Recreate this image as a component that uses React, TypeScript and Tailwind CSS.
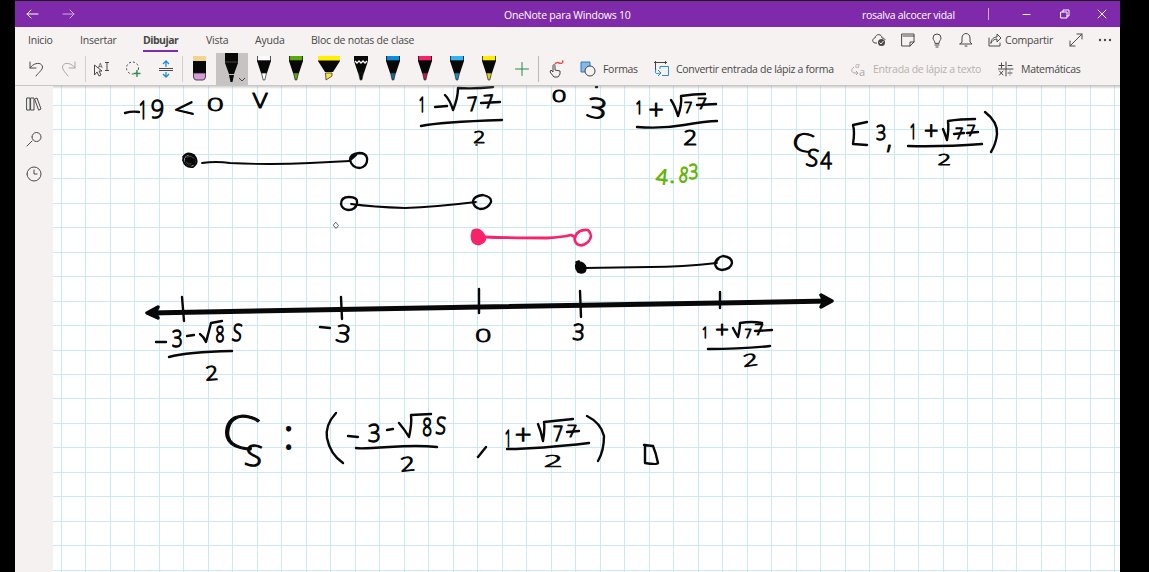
import React from "react";

type G = [string, number, number, number, number, number?, string?];

// [character, centre x, baseline y, cap height, width scale, rotation, fill]
const glyphs: G[] = [
  ["1", 143, 119, 18, 0.6], ["9", 157, 118, 18, 0.95, 2], ["<", 185, 119, 20, 1.3, -6], ["0", 215, 111, 13, 1.65], ["V", 260, 108, 14, 1.3],
  ["1", 422, 112, 14, 0.6], ["7", 473, 111, 14, 0.95, -4], ["7", 489, 108, 13, 1, -4], ["2", 479, 143, 12, 1.25],
  ["0", 559, 102, 11.5, 1.6], ["3", 595, 118, 20, 1.3, 10],
  ["1", 639, 114, 13, 0.7], ["+", 656, 119, 19, 1], ["7", 688, 113, 11, 0.95], ["7", 702, 109, 11, 1.1], ["2", 690, 145, 14, 1.25],
  ["4", 661, 184, 15, 1, 6, "#63b50a"], [".", 672, 183, 17, 1.1, 0, "#63b50a"], ["8", 682.5, 182, 15, 0.75, 8, "#63b50a"], ["3", 693.5, 179, 14, 0.85, 0, "#63b50a"],
  ["C", 801, 151, 18, 1.35, 12], ["S", 811, 166, 17, 0.95, 10], ["4", 826, 169, 17, 0.85],
  ["3", 881, 140, 15, 0.85], [",", 889, 148, 19, 1],
  ["1", 913, 139, 14, 0.6], ["+", 931, 140, 18, 1], ["7", 959, 139, 11, 0.9], ["7", 971, 136, 11, 1], ["2", 944, 165, 10, 1.7],
  ["3", 177, 347, 17, 0.8], ["8", 220, 342, 16, 0.7], ["S", 236, 341, 17, 0.75, 8], ["2", 212, 380, 14, 1.15, -4],
  ["3", 342, 342, 17, 1.1, 8], ["0", 483, 342, 12.5, 1.65], ["3", 578, 340, 16, 0.95, 4],
  ["1", 705, 338, 11, 0.7], ["+", 722, 338, 17, 1], ["7", 748, 338, 9, 0.95], ["7", 759, 335, 10, 1.1], ["2", 751, 366, 12, 1.6, -8],
  ["C", 236, 447, 33, 1.25, 14], ["S", 252, 466, 21, 1.1, 8], [":", 288.5, 449, 29, 1],
  ["3", 374, 442, 18, 0.9], ["8", 427, 436, 18, 0.68], ["S", 440, 434, 17, 0.8, 5], ["2", 408, 471, 14, 1.35, -6],
  ["1", 508, 447, 17, 0.5], ["+", 523, 444, 20, 1.05], ["7", 558, 441, 14, 0.9], ["7", 572, 437, 12, 1.05], ["2", 553, 467, 11.5, 2.1],
];

const strokes: string[] = [
  "M125 113Q132 111 139 112", "M447 106L435 107",
  "M445 95Q450 100 453 110Q458 98 458 88Q475 89 493 87M481 103L500 102M421 126Q440 122 502 120",
  "M596 87h1",
  "M671 100Q675 106 678 116Q682 105 681 96Q694 94 705 94M697 105L716 104M637 127Q661 129 684 125T717 121",
  "M943 129Q945 134 947 140Q949 129 948 121Q960 119 975 119M954 134L964 133M967 133L978 132M908 146Q942 147 982 144",
  "M867 122L853 125Q855 132 853 144L867 145", "M985 112Q998 122 997 134Q996 144 991 152",
  "M156 342L166 342M187 336L194 335M200 334Q204 337 206 342Q209 331 211 323L222 321M169 357Q187 352 232 351",
  "M320 327L330 328",
  "M733 328Q735 332 738 337Q740 328 740 323Q752 321 762 323M755 331L772 330M708 349Q741 349 770 346",
  "M336 413Q325 425 327 438Q330 454 343 463",
  "M348 436L358 437M387 430L393 429M399 423Q405 430 409 437Q412 424 411 415L431 414M356 448Q360 449 389 447T437 447",
  "M486 447L478 457",
  "M538 424Q541 431 543 441Q545 429 544 422L573 419M567 432L579 431M507 449Q538 449 589 443",
  "M587 416Q601 423 604 436Q604 451 598 461",
  "M645 445L645 463Q657 465 658 463Q656 453 653 446L644 445",
];

function Key({ g }: { g: G }) {
  const [c, x, y, h, s, r = 0, f = "#080808"] = g;
  return (
    <text fontSize={h / 0.715} fontWeight={300} textAnchor="middle" fill={f} transform={`translate(${x} ${y}) rotate(${r}) scale(${s} 1)`} stroke={f} strokeWidth={c === ":" ? 2 : 1.2} vectorEffect="non-scaling-stroke">
      {c}
    </text>
  );
}

function Ink() {
  const cols = Array.from({ length: 44 }, (_, i) => Math.round(61 + i * 24.49 - 53));
  const rows = Array.from({ length: 20 }, (_, i) => Math.round(105 + i * 24.45 - 86));
  return (
    <svg className="block h-[486px] w-[1067px]" viewBox="0 0 1067 486">
      <g fill="#cae9f2">
        {cols.map((x) => <rect key={x} x={x} y="0" width="1" height="486" />)}
        {rows.map((y) => <rect key={y} x="0" y={y} width="1067" height="1" />)}
      </g>
      <g transform="translate(-53 -86)" fill="none" stroke="#080808" strokeWidth="2.4" strokeLinecap="round" strokeLinejoin="round" fontFamily="'Open Sans','Noto Sans',sans-serif">
        {strokes.map((d) => <path key={d} d={d} />)}
        {glyphs.map((g, i) => <Key key={i} g={g} />)}
        <g strokeWidth="1.8">
          <path d="M202 163Q216 161 230 163Q270 165 310 163L350 161M351 204Q373 207 405 208Q435 207 476 202M584 268L650 267Q682 267 717 263" />
          <path strokeWidth="2.3" d="M350 160Q350 154 359 153Q366 153 367 158Q368 166 360 168Q352 168 350 160Q352 159 356 155M341 204Q341 197 349 197Q358 197 357 203Q356 210 348 210Q342 209 341 204M473 201Q474 196 483 195Q492 197 491 202Q488 209 480 209Q473 207 473 201M715 263Q716 258 723 256Q732 257 732 263Q731 269 722 270Q715 269 715 263L719 258" />
          <circle cx="190" cy="160.500" r="5.500" fill="#080808" stroke="none" />
          <path d="M183 157Q187 151 194 155Q200 162 193 167Q185 168 183 160Q184 154 190 154Q197 158 194 164" />
          <path d="M187 157Q191 155 194 158M186 162Q188 165 191 164" stroke="#777" strokeWidth=".6" />
          <path d="M576 262Q584 261 586 268Q585 275 578 272Q573 265 579 261Z" fill="#080808" />
        </g>
        <g stroke="#f7236b" strokeWidth="2.800">
          <path d="M484 237Q510 238 547 238Q563 237 571 235L575 237" />
          <path d="M473 231Q479 228 483 234Q488 241 479 244Q472 244 472 236Z" fill="#f7236b" />
          <path d="M575 237Q578 229 588 230Q594 236 588 242Q581 248 576 243Q573 239 577 233" strokeWidth="2.600" />
        </g>
        <path strokeWidth="5" strokeLinecap="butt" d="M150 313L480 307L830 301" />
        <path strokeWidth="3.500" fill="#080808" d="M158 307L147 313L158 318L155 313ZM821 295L832 301L821 307L824 301Z" />
        <path d="M182 297L184 321M341 297L342 319M479 289L479 313M580 291L581 317M720 292L720 308" />
        <path d="M336 222.500L338.500 225.500L336 228.500L333.500 225.500Z" strokeWidth="0.900" stroke="#555" />
        <path d="M476 145h1" strokeWidth="1.500" />
      </g>
    </svg>
  );
}

function Icon({ d, w = 16, c = "#4b4949", className = "" }: { d: string; w?: number; c?: string; className?: string }) {
  return (
    <svg width={w} height="16" viewBox={`0 0 ${w} 16`} className={`shrink-0 ${className}`} fill="none" stroke={c} strokeWidth="1" strokeLinecap="round" strokeLinejoin="round">
      <path d={d} />
    </svg>
  );
}

function Pen({ cap, tip, pencil = false }: { cap: string; tip: string; pencil?: boolean }) {
  return (
    <svg width="14" height="26" viewBox="0 0 14 26" className="shrink-0">
      <path d="M0 0H14V5L10 17H4L0 5Z" fill="#080808" />
      <path d="M.7 0H13.300V4.300H.7Z" fill={cap} />
      <path d="M4.500 17H9.500L7.800 24H6.200Z" fill={tip} stroke="#222" strokeWidth=".7" />
      {pencil && <path d="M1 5L3 7L5 5L7 7L9 5L11 7L13 5" stroke="#fff" strokeWidth="1.300" fill="none" />}
    </svg>
  );
}

const tabs = [
  ["Inicio", "w-[52px]"], ["Insertar", "w-[63px]"], ["Dibujar", "w-[63px]"], ["Vista", "w-[49px]"], ["Ayuda", "w-[56px]"], ["Bloc de notas de clase", "w-[121px]"],
];
const pens = [["#ffffff", "#ffffff"], ["#5ba613", "#5ba613"]];
const pens2 = [["#0a8dd8", "#126897"], ["#f7236b", "#b51e48"], ["#32b5f5", "#218abd"], ["#ffed00", "#e1cf22"]];

export default function App() {
  return (
    <div className="h-[572px] w-[1149px] overflow-hidden bg-black font-['Open_Sans','Noto_Sans',sans-serif] text-[10.5px] tracking-[-0.22px] text-[#4a4747]">
      <div className="mr-[29px] ml-[15px] flex h-full flex-col bg-[#f5f2f1]">
        <div className="h-px shrink-0 bg-[#1b1b1b]" />
        <header className="flex h-[26px] shrink-0 items-center bg-[#7f2aab] text-white">
          <Icon w={14} c="#fff" className="ml-[11px]" d="M1 8H12M5 4L1 8L5 12" />
          <Icon w={14} c="#d3aee5" className="ml-[22px]" d="M1 8H12M8 4L12 8L8 12" />
          <span className="ml-[428px] w-[358px] pt-[3px] whitespace-nowrap">OneNote para Windows 10</span>
          <span className="w-[126px] pt-[3px] tracking-[-0.27px] whitespace-nowrap">rosalva alcocer vidal</span>
          <span className="h-3 w-px bg-[#d3aee5]" />
          <Icon c="#fff" w={10} className="ml-[33px]" d="M1 8.500H8" />
          <Icon c="#fff" w={10} className="ml-[28px]" d="M1 6H7V12H1ZM3 6V4H9V10H7" />
          <Icon c="#fff" w={10} className="ml-[27px]" d="M1 4L9 12M9 4L1 12" />
        </header>
        <div className="flex h-[26px] shrink-0 items-center pl-[13px]">
          {tabs.map(([t, w]) => (
            <div key={t} className={`${w} flex h-full shrink-0 flex-col justify-between pt-[5.500px] pb-px whitespace-nowrap`}>
              <span className={t === "Dibujar" ? "font-bold tracking-[-0.5px]" : ""}>{t}</span>
              {t === "Dibujar" && <span className="h-0.5 w-[35px] bg-[#7f2aab]" />}
            </div>
          ))}
          <svg width="16" height="16" viewBox="0 0 16 16" className="ml-[439px] shrink-0"><path d="M6 11H4C0 10 2 6 4 6C5 1 11 2 11 6C13 6 14 7 14 8" fill="none" stroke="#494747" /><circle cx="10.500" cy="10.500" r="3.500" fill="#494747" /><path d="M8.500 10.500L10 12L12.500 9" fill="none" stroke="#fff" strokeWidth=".9" /></svg>
          <Icon className="ml-[13px]" d="M2 2H14V10L10 14H2ZM3 4H14M14 10H10V14" />
          <Icon className="ml-[13px]" d="M6 11C6 9 4 8 4 6A4 4 0 0 1 12 6C12 8 10 9 10 11ZM6 13H10M7 15H9" />
          <Icon className="ml-[13px]" d="M2 12H14L12 10V6C12 0 4 0 4 6V10ZM7 14H9" />
          <Icon w={14} className="ml-[14px]" d="M1 6V14H12V11M3 11C3 7 6 5 9 5V2L13 6L9 10V7C6 7 4 9 3 11Z" />
          <span className="ml-[3px] w-[62px] pt-px tracking-[-0.2px]">Compartir</span>
          <Icon w={14} className="ml-[2px]" d="M1 14L13 2M8 2H13V7M1 9V14H6" />
          <svg width="14" height="4" className="ml-[15px]" fill="#494747"><circle cx="2" cy="2" r="1.200" /><circle cx="7" cy="2" r="1.200" /><circle cx="12" cy="2" r="1.200" /></svg>
        </div>
        <div className="flex h-[32px] shrink-0 items-center tracking-[-0.3px]">
          <Icon className="ml-[14px]" d="M1 1V7H7M1 7C5 1 13 1 13.500 6C13.500 9 10 11 7 15" />
          <Icon className="ml-[16px]" c="#aaa7a6" d="M14 1V7H8M14 7C10 1 2 1 1.500 6C1.500 9 4 11 7 15" />
          <div className="ml-[8px] h-[26px] w-px bg-[#d1cecc]" />
          <svg width="17" height="18" className="ml-[7px]" fill="none" stroke="#4b4949"><path d="M1.500 5V15L4 12L6 16L8 15L6 11H9Z" /><path d="M12 2.500H16M14 2.500V10.500M12 10.500H16" /><text x="5" y="8" fontSize="7" stroke="none" fill="#444">A</text></svg>
          <svg width="18" height="18" className="ml-[15px]" fill="none"><circle cx="7.500" cy="8" r="6" stroke="#4b4949" strokeDasharray="2 2" /><path d="M12 10V17M8.500 13.500H15.500" stroke="#2b9251" strokeWidth="1.400" /></svg>
          <svg width="16" height="18" className="ml-[15px]" fill="none"><path d="M1 8.500H15M1 10.500H15" stroke="#4b4949" /><path d="M8 7V2M5 4L8 1L11 4M8 12V16M5 14L8 17L11 14" stroke="#258bd5" strokeWidth="1.300" /></svg>
          <div className="ml-[8px] h-[26px] w-px bg-[#d1cecc]" />
          <svg width="13" height="26" className="ml-[10px]"><path d="M0 0H13V5H0Z" fill="#f3d48f" /><path d="M0 5H13V17H0Z" fill="#080808" /><path d="M.5 17H12.500V21Q12 24 10 24H3Q1 24 .5 21Z" fill="#d69bd9" stroke="#222" strokeWidth=".8" /></svg>
          <div className="ml-[10px] flex h-full w-8 items-center bg-[#c6c3c2]">
            <svg width="32" height="32"><path d="M9 0H22V10L18 21H13L9 10Z" fill="#080808" /><path d="M9 9H22" stroke="#444" /><path d="M13 22H18L16.500 29H14.500Z" fill="#080808" /><path d="M23 25L26 28L29 25" fill="none" stroke="#444" /></svg>
          </div>
          <div className="ml-[9px] flex gap-[18px]">
            {pens.map(([a, b], i) => <Pen key={i} cap={a} tip={b} />)}
          </div>
          <svg width="24" height="26" className="ml-[14px]"><path d="M1 0H23V5L16 16H8L1 5Z" fill="#080808" /><path d="M1 0H23V4.500H1Z" fill="#fff000" /><path d="M8.500 17H15V20L9 24Z" fill="#f5e63b" stroke="#222" strokeWidth=".7" /></svg>
          <div className="ml-[13px] flex gap-[18px]">
            <Pen cap="#080808" tip="#080808" pencil />
            {pens2.map(([a, b]) => <Pen key={a} cap={a} tip={b} />)}
          </div>
          <Icon className="ml-[18px]" c="#26884b" d="M8 1.500V14.500M1.500 8H14.500" />
          <div className="ml-[8px] h-[26px] w-px bg-[#bbb8b7]" />
          <svg width="16" height="18" className="ml-[9px]" fill="none"><path d="M5 12V6C5 4 7 4 7 6V10L12 11V14L10 17H6L2 12L3 10L5 12" stroke="#444" /><path d="M7 4C10 0 11 5 14 3Q16 1 14 1" stroke="#e44640" strokeWidth="1.300" /></svg>
          <svg width="16" height="16" className="ml-[16px]"><path d="M1 1H10V11H1Z" fill="#83b9e8" stroke="#3279b8" /><circle cx="10" cy="10" r="5" fill="#f5f2f1" stroke="#444" /></svg>
          <span className="ml-[7px] w-[50px] pt-px">Formas</span>
          <svg width="17" height="16" fill="none"><path d="M1 1.500H14M2.500 0V9M12.500 0V3" stroke="#444" /><path d="M7 5.500H15.500V14.500H9M7 5.500V8M3 8.500C1 13 4 13 7 12M5 9L8 12L5 15" stroke="#258bd5" /></svg>
          <span className="ml-[6px] w-[175px] pt-px whitespace-nowrap">Convertir entrada de lápiz a forma</span>
          <svg width="16" height="18" fill="#aaa7a6" className="overflow-visible"><text x="4" y="8" fontSize="8" fontStyle="italic">a</text><text x="8" y="16" fontSize="11">a</text><path d="M3 7C0 9 0 12 3 13H7M5 11L7 13L5 15" fill="none" stroke="#aaa7a6" /></svg>
          <span className="ml-[6px] w-[125px] pt-px whitespace-nowrap text-[#b5b1b0]">Entrada de lápiz a texto</span>
          <Icon d="M0 8H15M8 1V15M1 4.500H6M3.500 2V7M10 4.500H14M1.500 10L5 14M5 10L1.500 14M10 12H14M12 10V10M12 14V14" />
          <span className="ml-[7px] pt-px">Matemáticas</span>
        </div>
        <div className="h-px shrink-0 bg-[#cac5c4]" />
        <div className="flex min-h-0 flex-1">
          <aside className="flex w-[38px] shrink-0 flex-col items-center gap-[19px] bg-[#f4f1f0] pt-[10px]">
            <Icon d="M1 2H4V14H1ZM5 2H8V14H5ZM9 3L11 2L15 13L13 14Z" />
            <Icon d="M1 15L6 10M6 6A4.500 4.500 0 1 0 15 6A4.500 4.500 0 1 0 6 6" />
            <Icon d="M1 8A7 7 0 1 0 15 8A7 7 0 1 0 1 8M8 4V8H11" />
          </aside>
          <main className="relative h-full w-[1067px] overflow-hidden bg-white">
            <Ink />
            <div className="absolute inset-x-0 top-0 h-[3px] bg-linear-to-b from-[#888]/40 to-transparent" />
          </main>
        </div>
      </div>
    </div>
  );
}
